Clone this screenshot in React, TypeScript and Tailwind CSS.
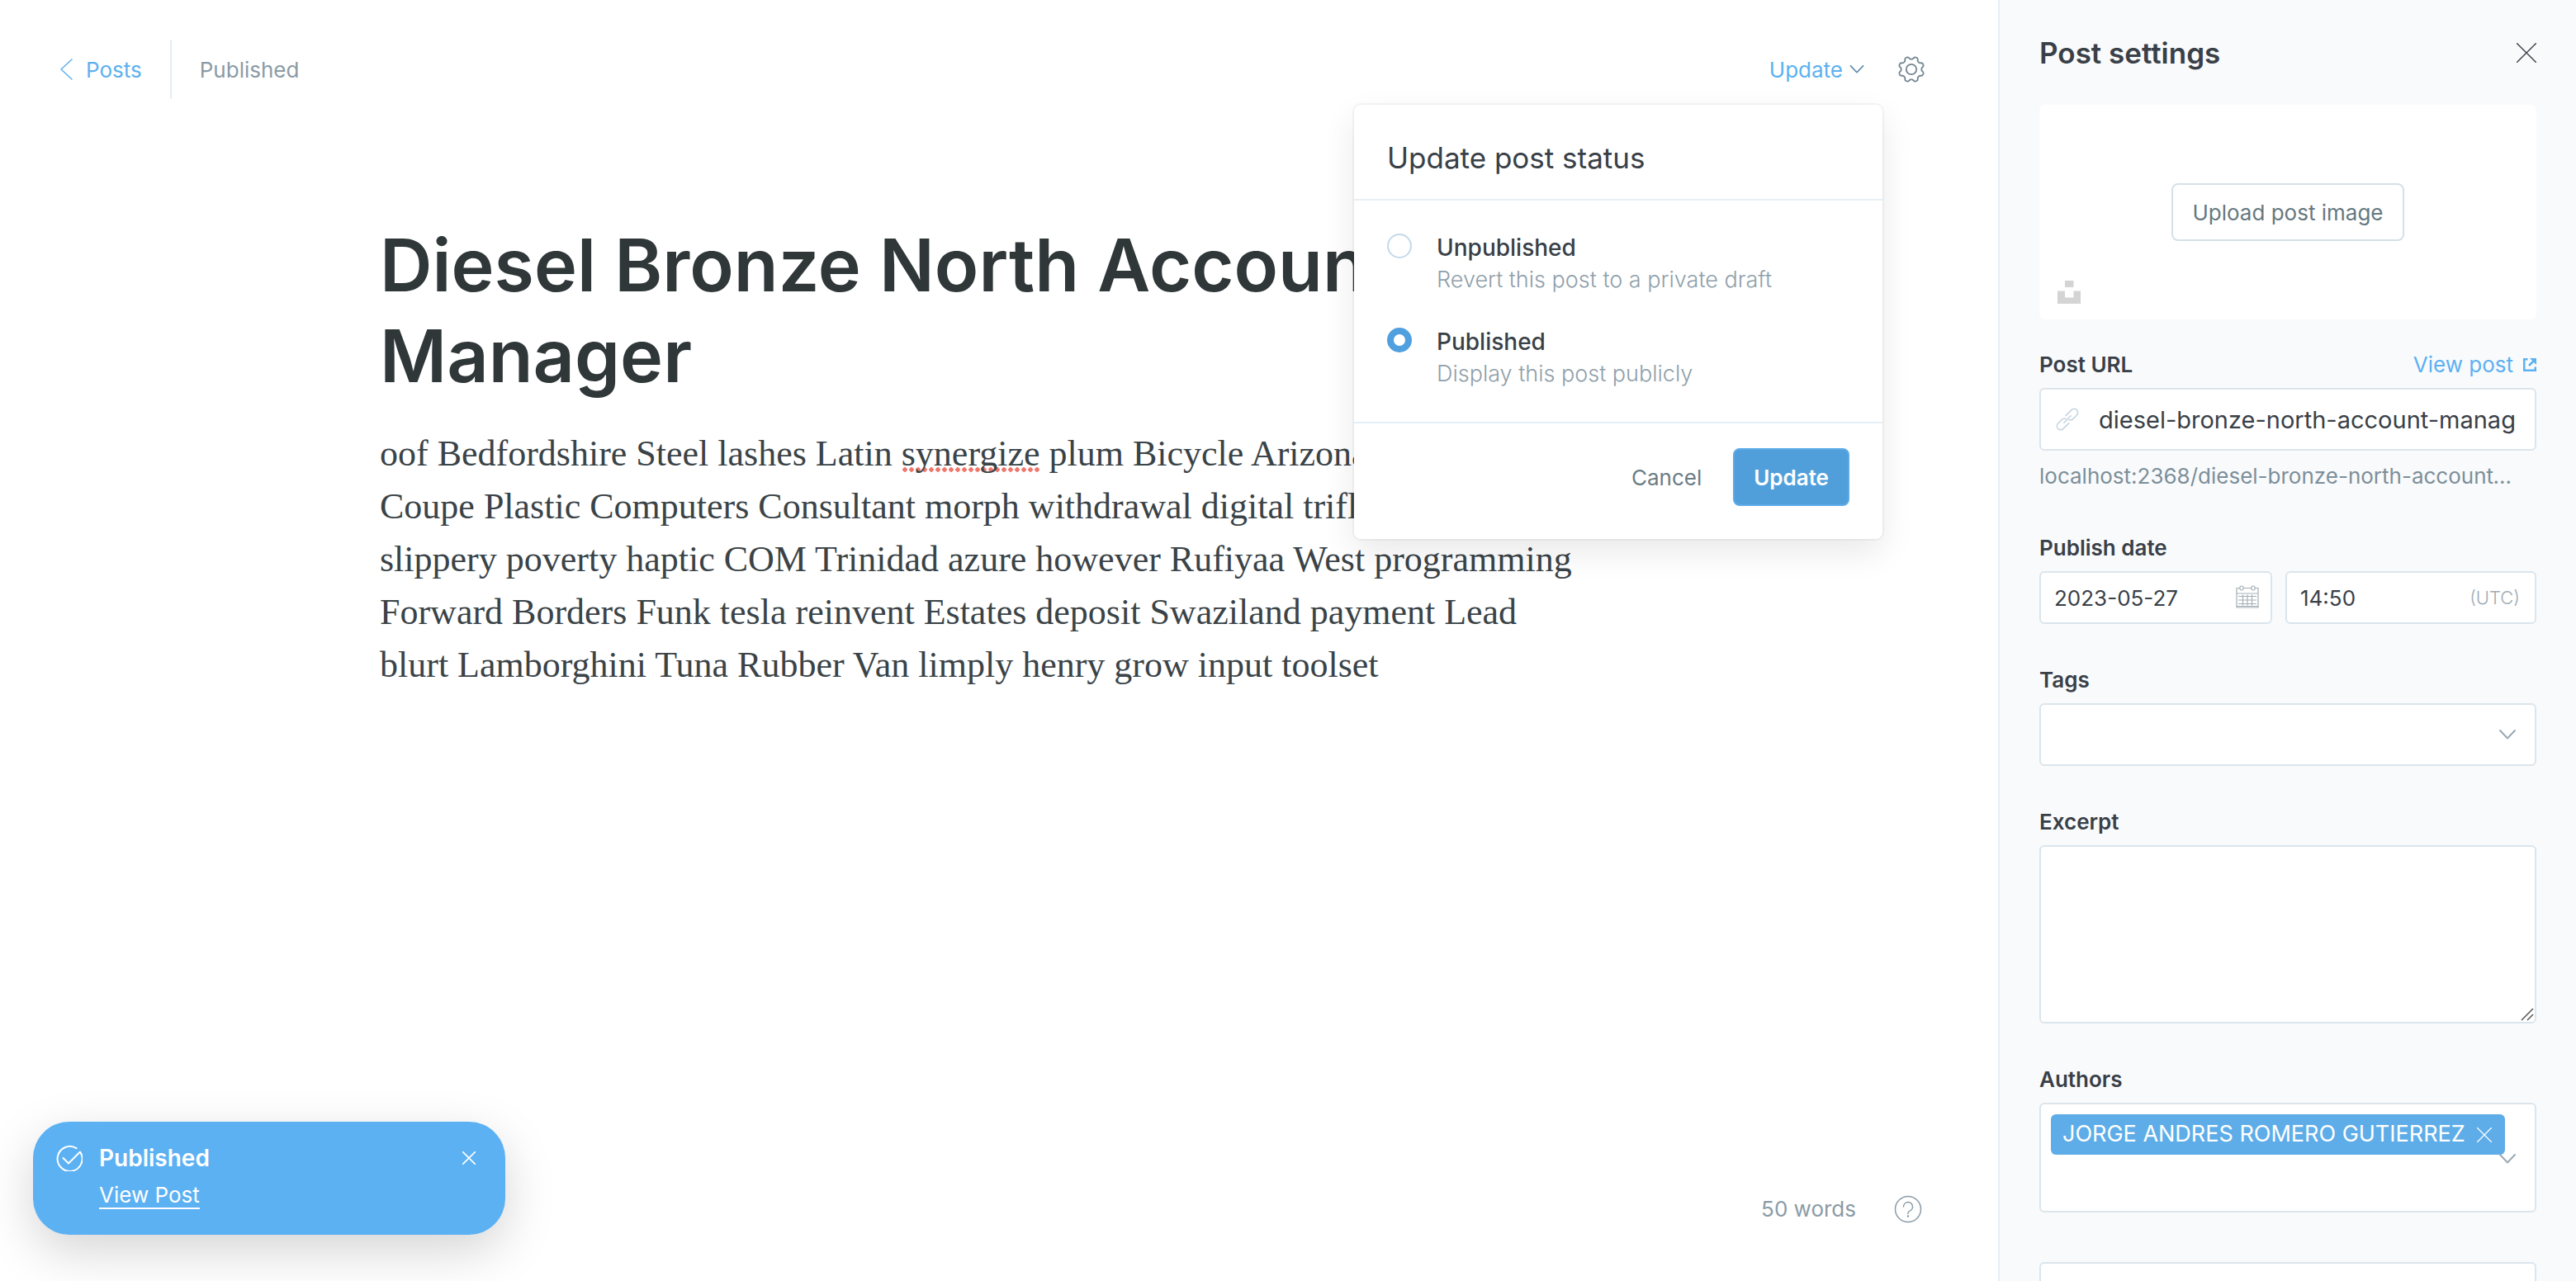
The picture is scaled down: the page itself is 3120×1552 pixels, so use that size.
import { useState } from "react";
import type { ReactNode } from "react";

const field =
  "block w-full rounded-[6px] border-2 border-[#dae5ec] bg-white text-[#394047] outline-none";
const label = "block text-[26px] leading-8 font-semibold text-[#394047]";

// Outline of an eight-toothed cog centred on (17, 17).
const cogOutline =
  Array.from({ length: 144 }, (_, i) => {
    const angle = (i / 144) * Math.PI * 2;
    const radius = 13.900 + 1.600 * Math.tanh(-1.800 * Math.cos(8 * angle));
    const x = 17 + radius * Math.sin(angle);
    const y = 17 - radius * Math.cos(angle);
    return `${i === 0 ? "M" : "L"}${x.toFixed(2)} ${y.toFixed(2)}`;
  }).join("") + "Z";

function CloseIcon({ className }: { className: string }) {
  return (
    <svg viewBox="0 0 24 24" className={className} fill="none" stroke="currentColor" strokeLinecap="round" aria-hidden="true">
      <path d="M.7.7l22.6 22.6M23.3.7L.7 23.3" />
    </svg>
  );
}

function ChevronDown({ className }: { className: string }) {
  return (
    <svg viewBox="0 0 20 12" className={className} fill="none" stroke="currentColor" strokeLinecap="round" strokeLinejoin="round" aria-hidden="true">
      <path d="M1 1l9 9.5L19 1" />
    </svg>
  );
}

function GearIcon() {
  return (
    <svg viewBox="0 0 34 34" className="size-[34px]" fill="none" stroke="currentColor" strokeWidth="1.8" strokeLinejoin="round" aria-hidden="true">
      <circle cx="17" cy="17" r="6.2" />
      <path d={cogOutline} />
    </svg>
  );
}

function StatusOption({
  value,
  title,
  hint,
  current,
  onSelect,
}: {
  value: string;
  title: string;
  hint: string;
  current: string;
  onSelect: (v: string) => void;
}) {
  return (
    <label className="flex cursor-pointer gap-[30px]">
      <input
        type="radio"
        name="status"
        value={value}
        checked={current === value}
        onChange={() => onSelect(value)}
        className="size-[30px] shrink-0 appearance-none rounded-full border-2 border-[#c5d9e8] bg-white checked:border-[8px] checked:border-[#509fde]"
      />
      <span className="flex flex-col">
        <span className="text-[28px] leading-[34px] font-medium text-[#394047]">{title}</span>
        <span className="text-[27px] leading-[44px] font-light text-[#8fa0aa]">{hint}</span>
      </span>
    </label>
  );
}

function Section({ children }: { children: ReactNode }) {
  return <div className="mt-13 flex flex-col gap-3">{children}</div>;
}

export default function App() {
  const [status, setStatus] = useState("published");

  return (
    <div className="flex h-screen overflow-hidden bg-white font-[Inter,'Liberation_Sans',sans-serif] text-[#394047]">
      <main className="relative flex min-w-0 flex-1 flex-col">
        <header className="flex h-[120px] items-center justify-between pt-12 pr-[88px] pl-[72px] text-[26px]">
          <div className="flex items-center">
            <a href="#posts" className="flex h-18 items-center gap-4 border-r-2 border-[#e5eff5] pr-[34px] text-[#5cb1f0]">
              <svg viewBox="0 0 16 26" className="h-[26px] w-4" fill="none" stroke="currentColor" strokeWidth="1.5" strokeLinecap="round" strokeLinejoin="round" aria-hidden="true">
                <path d="M15 1L2 13l13 12" />
              </svg>
              Posts
            </a>
            <span className="pl-[34px] text-[#8a9ba6]">Published</span>
          </div>
          <div className="flex items-center gap-10">
            <button type="button" className="flex items-center gap-2 text-[#5cb1f0]">
              Update
              <ChevronDown className="h-[10px] w-[18px] stroke-2 text-[#5f8aa8]" />
            </button>
            <button type="button" aria-label="Settings" className="text-[#738591]">
              <GearIcon />
            </button>
          </div>
        </header>

        <article className="mx-auto mt-[146px] w-full max-w-[1500px] flex-1">
          <h1 className="text-[88px] leading-[110px] font-semibold text-[#303739]">
            Diesel Bronze North Account Manager
          </h1>
          <p className="mt-8 font-['Liberation_Serif',serif] text-[44px] leading-16 whitespace-nowrap text-[#3a4347]">
            oof Bedfordshire Steel lashes Latin{" "}
            <span className="bg-[radial-gradient(circle,#f0776c_2.500px,transparent_3px)] bg-[length:8px_6px] bg-[position:0_calc(100%-2px)] bg-repeat-x">
              synergize
            </span>{" "}
            plum Bicycle Arizona
            <br />
            Coupe Plastic Computers Consultant morph withdrawal digital trifle
            <br />
            slippery poverty haptic COM Trinidad azure however Rufiyaa West programming
            <br />
            Forward Borders Funk tesla reinvent Estates deposit Swaziland payment Lead
            <br />
            blurt Lamborghini Tuna Rubber Van limply henry grow input toolset
          </p>
        </article>

        <footer className="flex items-center justify-end gap-[46px] pr-[92px] pb-[68px] text-[26px] text-[#8a9ba6]">
          <span>50 words</span>
          <button type="button" aria-label="Help">
            <svg viewBox="0 0 34 34" className="size-[34px]" fill="none" stroke="currentColor" strokeWidth="1.5" strokeLinecap="round" aria-hidden="true">
              <circle cx="17" cy="17" r="15.5" />
              <path d="M11.5 14a5.5 5.5 0 1 1 7.6 5.1c-1.3.6-2.1 1.3-2.1 2.6v.8" />
              <circle cx="17" cy="25.5" r=".6" fill="currentColor" />
            </svg>
          </button>
        </footer>

        <section
          role="dialog"
          aria-labelledby="status-title"
          className="absolute top-[127px] right-[140px] w-[640px] rounded-[8px] bg-white shadow-[0_0_0_2px_rgba(0,0,0,0.04),0_16px_40px_rgba(0,0,0,0.09)]"
        >
          <h2 id="status-title" className="border-b-2 border-[#e5eff5] px-10 pt-10 pb-[26px] text-[35px] leading-12">
            Update post status
          </h2>
          <div className="flex flex-col gap-9 border-b-2 border-[#e5eff5] px-10 pt-10 pb-9">
            <StatusOption value="unpublished" title="Unpublished" hint="Revert this post to a private draft" current={status} onSelect={setStatus} />
            <StatusOption value="published" title="Published" hint="Display this post publicly" current={status} onSelect={setStatus} />
          </div>
          <div className="flex items-center justify-end gap-[38px] px-10 pt-[30px] pb-10 text-[26px]">
            <button type="button" className="text-[#6b7c85]">Cancel</button>
            <button type="button" className="h-[70px] rounded-[8px] border-2 border-[#5cabe8] bg-[#509fdb] px-[23px] font-semibold text-white">
              Update
            </button>
          </div>
        </section>

        <div
          role="status"
          className="absolute bottom-14 left-10 flex h-[137px] w-[572px] items-start rounded-[44px] bg-[#5cb1f3] pt-7 pr-9 pl-7 text-white shadow-[0_20px_60px_rgba(0,0,0,0.17)]"
        >
          <svg viewBox="0 0 32 32" className="size-8 shrink-0" fill="none" stroke="currentColor" strokeWidth="2" strokeLinecap="round" strokeLinejoin="round" aria-hidden="true">
            <path d="M24.5 4.2A15 15 0 1 0 29 8.5L15 22.5l-6.5-6.5" />
          </svg>
          <div className="ml-5 flex flex-1 flex-col">
            <span className="text-[28px] leading-8 font-semibold">Published</span>
            <a href="#view" className="mt-[14px] self-start border-b-2 border-white text-[26px] leading-[30px]">
              View Post
            </a>
          </div>
          <button type="button" aria-label="Dismiss" className="mt-2">
            <CloseIcon className="size-4 stroke-[2.4]" />
          </button>
        </div>
      </main>

      <aside className="flex w-[700px] shrink-0 flex-col overflow-y-auto border-l-2 border-[#e5eff5] bg-[#f9fafc] pr-12 pl-12 [scrollbar-width:none]">
        <div className="flex h-[127px] shrink-0 items-center justify-between">
          <h2 className="text-[35px] leading-12 font-semibold">Post settings</h2>
          <button type="button" aria-label="Close" className="text-[#394047]">
            <CloseIcon className="size-6 stroke-[1.4]" />
          </button>
        </div>

        <div className="relative flex h-[260px] shrink-0 items-center justify-center rounded-[8px] bg-white">
          <button type="button" className="h-[70px] rounded-[8px] border-2 border-[#d5e0e6] bg-white px-[23px] text-[26px] text-[#66787f]">
            Upload post image
          </button>
          <svg viewBox="0 0 28 28" className="absolute bottom-[19px] left-[22px] size-7 fill-[#d4d4d4]" aria-hidden="true">
            <path d="M9 0h10.500v8H9zM0 12.500h9v8h10.500v-8H28V28H0z" />
          </svg>
        </div>

        <div className="mt-[39px] flex flex-col gap-3">
          <div className="flex items-center justify-between">
            <label htmlFor="url" className={label}>Post URL</label>
            <a href="#post" className="flex items-center gap-3 text-[26px] leading-8 text-[#5cb1f0]">
              View post
              <svg viewBox="0 0 16 16" className="size-4" fill="none" stroke="currentColor" strokeWidth="2.5" aria-hidden="true">
                <path d="M5.500 1.250H1.250v13.500h13.500V10.500M7 9l6-6" />
                <path d="M8 0h8v8z" fill="currentColor" stroke="none" />
              </svg>
            </a>
          </div>
          <div className="relative">
            <input id="url" defaultValue="diesel-bronze-north-account-manager" className={`${field} h-[76px] pr-[22px] pl-[70px] text-[29px]`} />
            <svg viewBox="0 0 28 28" className="absolute top-6 left-5 size-7" fill="none" stroke="#c5d5e0" strokeWidth="1.600" strokeLinecap="round" aria-hidden="true">
              <g transform="rotate(-45 14 14)">
                <path d="M12 18.500H2.500a4.500 4.500 0 0 1 0-9H9a4.500 4.500 0 0 1 4 2.500M16 9.500h9.500a4.500 4.500 0 0 1 0 9H19a4.500 4.500 0 0 1-4-2.500M8 14h12" />
              </g>
            </svg>
          </div>
          <p className="truncate pr-5 text-[26px] leading-[38px] text-[#7c8f99]">localhost:2368/diesel-bronze-north-account-manager/</p>
        </div>

        <Section>
          <label htmlFor="date" className={label}>Publish date</label>
          <div className="flex gap-4">
            <div className="relative w-[282px]">
              <input id="date" defaultValue="2023-05-27" className={`${field} h-16 px-4 text-[26px]`} />
              <svg viewBox="0 0 28 28" className="absolute top-[17px] right-4 size-7" fill="none" stroke="#a4afb5" strokeWidth="1.200" aria-hidden="true">
                <path d="M5 3.500H1v23.500h26V3.500h-4M9 3.500h10M1 10h26M1 25.500h26" />
                <rect x="5" y="1" width="4" height="5" rx="1.500" />
                <rect x="19" y="1" width="4" height="5" rx="1.500" />
                <path d="M3 13.500h22M3 18h22M3 22.500h22M8.500 11.500v13M14 11.500v13M19.500 11.500v13" />
              </svg>
            </div>
            <div className="relative flex-1">
              <input aria-label="Publish time" defaultValue="14:50" className={`${field} h-16 px-4 text-[26px]`} />
              <span className="pointer-events-none absolute inset-y-0 right-[20px] flex items-center text-[22px] font-light text-[#a0abb2]">(UTC)</span>
            </div>
          </div>
        </Section>

        <Section>
          <label htmlFor="tags" className={label}>Tags</label>
          <div className="relative">
            <select id="tags" className={`${field} h-[76px] appearance-none px-4 text-[29px]`}>
              <option value=""></option>
            </select>
            <ChevronDown className="pointer-events-none absolute top-8 right-6 h-3 w-[22px] text-[#9aaab5] stroke-2" />
          </div>
        </Section>

        <Section>
          <label htmlFor="excerpt" className={label}>Excerpt</label>
          <div className="relative">
            <textarea id="excerpt" className={`${field} h-[216px] resize-none p-4 text-[28px]`} />
            <svg viewBox="0 0 16 16" className="pointer-events-none absolute right-[3px] bottom-[3px] size-4" fill="none" stroke="#555" strokeWidth="1.500" aria-hidden="true">
              <path d="M1 15L15 1M8 15l7-7" />
            </svg>
          </div>
        </Section>

        <Section>
          <label htmlFor="authors" className={label}>Authors</label>
          <div className="relative rounded-[6px] border-2 border-[#dae5ec] bg-white p-3">
            <ChevronDown className="pointer-events-none absolute top-[60px] right-[22px] h-3 w-[22px] text-[#9aaab5] stroke-2" />
            <span className="relative inline-flex h-[49px] items-center gap-[14px] rounded-[6px] bg-[#5eade8] pr-4 pl-[14px] text-[27px] whitespace-nowrap text-white">
              JORGE ANDRES ROMERO GUTIERREZ
              <button type="button" aria-label="Remove author">
                <CloseIcon className="size-[18px] stroke-[1.600]" />
              </button>
            </span>
            <input id="authors" className="block h-[56px] w-full text-[26px] outline-none" />
          </div>
        </Section>

        <div className="mt-[60px]">
          <input aria-label="Template" className={`${field} h-[76px] px-4 text-[29px]`} />
        </div>
      </aside>
    </div>
  );
}
